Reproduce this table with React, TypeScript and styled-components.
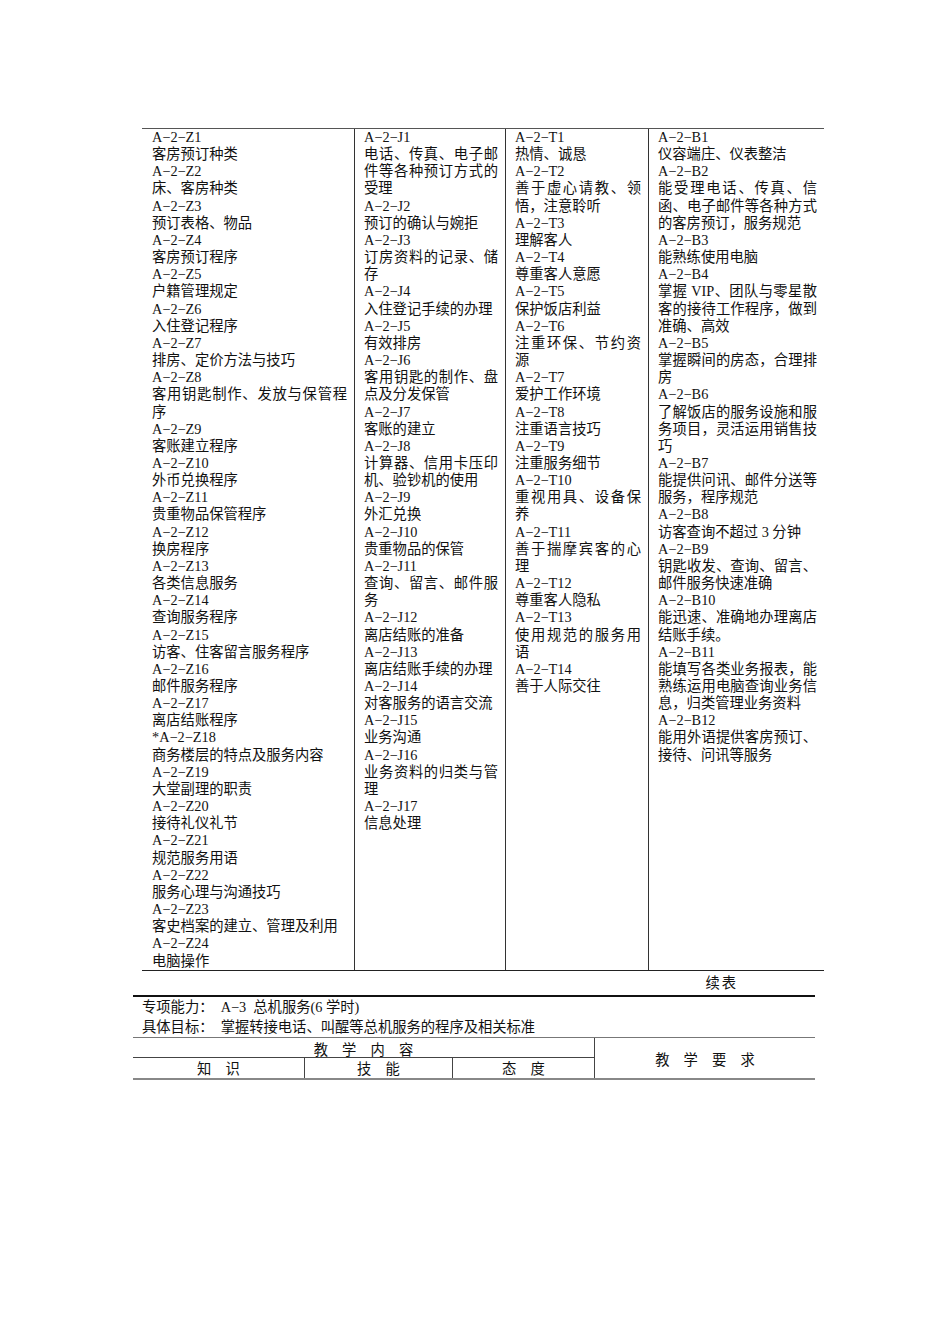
import styled, { createGlobalStyle } from 'styled-components'

const GlobalStyle = createGlobalStyle`
    html, body {
        margin: 0;
        padding: 0;
        background: #fff;
    }
    body {
        font-family: 'Liberation Serif', 'Noto Sans CJK SC', serif;
        color: #111;
    }
`

type Entry = [string, string]

const knowledge: Entry[] = [
    ['A−2−Z1', '客房预订种类'],
    ['A−2−Z2', '床、客房种类'],
    ['A−2−Z3', '预订表格、物品'],
    ['A−2−Z4', '客房预订程序'],
    ['A−2−Z5', '户籍管理规定'],
    ['A−2−Z6', '入住登记程序'],
    ['A−2−Z7', '排房、定价方法与技巧'],
    ['A−2−Z8', '客用钥匙制作、发放与保管程序'],
    ['A−2−Z9', '客账建立程序'],
    ['A−2−Z10', '外币兑换程序'],
    ['A−2−Z11', '贵重物品保管程序'],
    ['A−2−Z12', '换房程序'],
    ['A−2−Z13', '各类信息服务'],
    ['A−2−Z14', '查询服务程序'],
    ['A−2−Z15', '访客、住客留言服务程序'],
    ['A−2−Z16', '邮件服务程序'],
    ['A−2−Z17', '离店结账程序'],
    ['*A−2−Z18', '商务楼层的特点及服务内容'],
    ['A−2−Z19', '大堂副理的职责'],
    ['A−2−Z20', '接待礼仪礼节'],
    ['A−2−Z21', '规范服务用语'],
    ['A−2−Z22', '服务心理与沟通技巧'],
    ['A−2−Z23', '客史档案的建立、管理及利用'],
    ['A−2−Z24', '电脑操作'],
]

const skills: Entry[] = [
    ['A−2−J1', '电话、传真、电子邮件等各种预订方式的受理'],
    ['A−2−J2', '预订的确认与婉拒'],
    ['A−2−J3', '订房资料的记录、储存'],
    ['A−2−J4', '入住登记手续的办理'],
    ['A−2−J5', '有效排房'],
    ['A−2−J6', '客用钥匙的制作、盘点及分发保管'],
    ['A−2−J7', '客账的建立'],
    ['A−2−J8', '计算器、信用卡压印机、验钞机的使用'],
    ['A−2−J9', '外汇兑换'],
    ['A−2−J10', '贵重物品的保管'],
    ['A−2−J11', '查询、留言、邮件服务'],
    ['A−2−J12', '离店结账的准备'],
    ['A−2−J13', '离店结账手续的办理'],
    ['A−2−J14', '对客服务的语言交流'],
    ['A−2−J15', '业务沟通'],
    ['A−2−J16', '业务资料的归类与管理'],
    ['A−2−J17', '信息处理'],
]

const attitude: Entry[] = [
    ['A−2−T1', '热情、诚恳'],
    ['A−2−T2', '善于虚心请教、领悟，注意聆听'],
    ['A−2−T3', '理解客人'],
    ['A−2−T4', '尊重客人意愿'],
    ['A−2−T5', '保护饭店利益'],
    ['A−2−T6', '注重环保、节约资源'],
    ['A−2−T7', '爱护工作环境'],
    ['A−2−T8', '注重语言技巧'],
    ['A−2−T9', '注重服务细节'],
    ['A−2−T10', '重视用具、设备保养'],
    ['A−2−T11', '善于揣摩宾客的心理'],
    ['A−2−T12', '尊重客人隐私'],
    ['A−2−T13', '使用规范的服务用语'],
    ['A−2−T14', '善于人际交往'],
]

const requirements: Entry[] = [
    ['A−2−B1', '仪容端庄、仪表整洁'],
    ['A−2−B2', '能受理电话、传真、信函、电子邮件等各种方式的客房预订，服务规范'],
    ['A−2−B3', '能熟练使用电脑'],
    ['A−2−B4', '掌握 VIP、团队与零星散客的接待工作程序，做到准确、高效'],
    ['A−2−B5', '掌握瞬间的房态，合理排房'],
    ['A−2−B6', '了解饭店的服务设施和服务项目，灵活运用销售技巧'],
    ['A−2−B7', '能提供问讯、邮件分送等服务，程序规范'],
    ['A−2−B8', '访客查询不超过 3 分钟'],
    ['A−2−B9', '钥匙收发、查询、留言、邮件服务快速准确'],
    ['A−2−B10', '能迅速、准确地办理离店结账手续。'],
    ['A−2−B11', '能填写各类业务报表，能熟练运用电脑查询业务信息，归类管理业务资料'],
    ['A−2−B12', '能用外语提供客房预订、接待、问讯等服务'],
]

const columns = [knowledge, skills, attitude, requirements]

const Page = styled.div`
    width: 950px;
    min-height: 1344px;
    box-sizing: border-box;
    padding: 128px 0 0 133px;
`
const ContentTable = styled.div`
    margin-left: 9px;
    width: 682px;
    display: grid;
    grid-template-columns: 212px 151px 143px 176px;
    border-top: 1px solid #555;
    border-bottom: 1px solid #222;
`
const Cell = styled.div<{ $first?: boolean }>`
    box-sizing: border-box;
    padding: 0 7px 0 ${(p) => (p.$first ? 10 : 9)}px;
    border-left: ${(p) => (p.$first ? 'none' : '1px solid #333')};
    font-size: 14.3px;
    line-height: 17.15px;
    line-break: strict;
`
const Code = styled.div`
    white-space: nowrap;
`
const Desc = styled.div`
    text-align: justify;
`
const Continued = styled.div`
    width: 682px;
    height: 24px;
    line-height: 24px;
    box-sizing: border-box;
    padding-right: 77px;
    text-align: right;
    font-size: 14.3px;
    letter-spacing: 2px;
`
const InfoBlock = styled.div`
    width: 682px;
    box-sizing: border-box;
    padding-left: 9px;
    border-top: 2px solid #111;
    border-bottom: 1px solid #777;
`
const InfoLine = styled.div`
    font-size: 14.3px;
    line-height: 20px;
    white-space: pre;
`
const HeadGrid = styled.div`
    width: 682px;
    display: grid;
    grid-template-columns: 171px 148px 142px 221px;
    grid-template-rows: 20px 20px;
    border-bottom: 2px solid #888;
`
const HeadCell = styled.div<{ $divider?: boolean }>`
    box-sizing: border-box;
    display: flex;
    align-items: center;
    justify-content: center;
    font-size: 14.3px;
    letter-spacing: 5.3px;
    padding-left: 5.3px;
    border-left: ${(p) => (p.$divider ? '1px solid #444' : 'none')};
`
const GroupHead = styled(HeadCell)`
    grid-column: 1 / 4;
    border-bottom: 1px solid #444;
    padding-top: 2px;
`
const RequireHead = styled(HeadCell)`
    grid-column: 4;
    grid-row: 1 / 3;
    padding-top: 1px;
`

export default function App() {
    return (
        <>
            <GlobalStyle />
            <Page>
                <ContentTable>
                    {columns.map((col, i) => (
                        <Cell key={i} $first={i === 0}>
                            {col.map(([code, text]) => (
                                <div key={code}>
                                    <Code>{code}</Code>
                                    <Desc>{text}</Desc>
                                </div>
                            ))}
                        </Cell>
                    ))}
                </ContentTable>
                <Continued>续表</Continued>
                <InfoBlock>
                    <InfoLine>专项能力：  A−3  总机服务(6 学时)</InfoLine>
                    <InfoLine>具体目标：  掌握转接电话、叫醒等总机服务的程序及相关标准</InfoLine>
                </InfoBlock>
                <HeadGrid>
                    <GroupHead>教 学 内 容</GroupHead>
                    <RequireHead $divider>教 学 要 求</RequireHead>
                    <HeadCell>知 识</HeadCell>
                    <HeadCell $divider>技 能</HeadCell>
                    <HeadCell $divider>态 度</HeadCell>
                </HeadGrid>
            </Page>
        </>
    )
}
